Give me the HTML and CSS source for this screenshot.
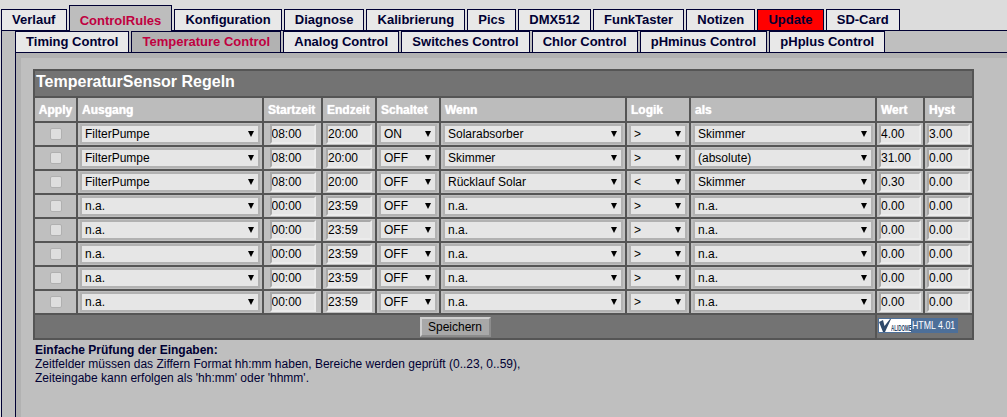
FILE: index.html
```html
<!DOCTYPE html>
<html>
<head>
<meta charset="utf-8"/>
<title>Temperature Control</title>
<link rel="stylesheet" href="styles.css">
</head>
<body>
<div class="tabs">
  <a class="tab">Verlauf</a>
  <a class="tab active">ControlRules</a>
  <a class="tab">Konfiguration</a>
  <a class="tab">Diagnose</a>
  <a class="tab">Kalibrierung</a>
  <a class="tab">Pics</a>
  <a class="tab">DMX512</a>
  <a class="tab">FunkTaster</a>
  <a class="tab">Notizen</a>
  <a class="tab alert">Update</a>
  <a class="tab">SD-Card</a>
</div>
<div class="panel">
  <div class="subtabs">
    <a class="tab sub">Timing Control</a>
    <a class="tab sub active">Temperature Control</a>
    <a class="tab sub">Analog Control</a>
    <a class="tab sub">Switches Control</a>
    <a class="tab sub">Chlor Control</a>
    <a class="tab sub">pHminus Control</a>
    <a class="tab sub">pHplus Control</a>
  </div>
  <div class="subpanel">
    <table class="rules">
      <colgroup>
        <col class="c-apply"><col class="c-sel"><col class="c-start"><col class="c-end"><col class="c-sw"><col class="c-sel"><col class="c-sw"><col class="c-sel"><col class="c-num"><col class="c-last">
      </colgroup>
      <tr><th colspan="10" class="title">TemperaturSensor Regeln</th></tr>
      <tr class="head">
        <th class="center">Apply</th><th>Ausgang</th><th>Startzeit</th><th>Endzeit</th><th>Schaltet</th><th>Wenn</th><th>Logik</th><th>als</th><th>Wert</th><th>Hyst</th>
      </tr>
      <tbody id="rows"></tbody>
      <tr class="foot">
        <td colspan="8" class="center"><button class="save">Speichern</button></td>
        <td colspan="2">
          <span class="badge">
            <span class="badge-left">
              <svg width="12" height="13" viewBox="0 0 12 13"><path d="M0 3 L4 1 L5.5 7 L11 0 L12 0 L6 13 L4 13 Z" fill="#2f4a6b"/></svg><span class="badge-name">ALIDOME</span>
            </span>
            <span class="badge-right"><span class="badge-text">HTML 4.01</span></span>
          </span>
        </td>
      </tr>
    </table>
    <div class="notes">
      <b>Einfache Prüfung der Eingaben:</b><br>
      Zeitfelder müssen das Ziffern Format hh:mm haben, Bereiche werden geprüft (0..23, 0..59),<br>
      Zeiteingabe kann erfolgen als 'hh:mm' oder 'hhmm'.
    </div>
  </div>
</div>
<script>
const data = [
  ['FilterPumpe', '08:00', '20:00', 'ON', 'Solarabsorber', '>', 'Skimmer', '4.00', '3.00'],
  ['FilterPumpe', '08:00', '20:00', 'OFF', 'Skimmer', '>', '(absolute)', '31.00', '0.00'],
  ['FilterPumpe', '08:00', '20:00', 'OFF', 'Rücklauf Solar', '<', 'Skimmer', '0.30', '0.00'],
]
for (let i = 0; i < 5; i++) {
  data.push(['n.a.', '00:00', '23:59', 'OFF', 'n.a.', '>', 'n.a.', '0.00', '0.00'])
}
const sel = function(v) {
  const s = document.createElement('select')
  const o = document.createElement('option')
  o.textContent = v
  s.appendChild(o)
  const w = document.createElement('span')
  w.className = 'sel'
  w.appendChild(s)
  return w
}
const inp = function(v) {
  const i = document.createElement('input')
  i.type = 'text'
  i.value = v
  return i
}
for (const d of data) {
  const tr = document.createElement('tr')
  tr.className = 'row'
  const items = [null, sel(d[0]), inp(d[1]), inp(d[2]), sel(d[3]), sel(d[4]), sel(d[5]), sel(d[6]), inp(d[7]), inp(d[8])]
  for (const it of items) {
    const td = document.createElement('td')
    if (it) {
      td.appendChild(it)
    } else {
      const c = document.createElement('input')
      c.type = 'checkbox'
      td.className = 'center'
      td.appendChild(c)
    }
    tr.appendChild(td)
  }
  rows.appendChild(tr)
}
</script>
</body>
</html>
```

FILE: styles.css
```css
html, body {
  height: 100%;
}
body {
  margin: 0;
  display: flex;
  flex-direction: column;
  background: #dcdcdc;
  font-family: "Liberation Sans", Arial, sans-serif;
  font-size: 12px;
  overflow: hidden;
}
/* tabs */
.tabs {
  display: flex;
  flex: none;
  align-items: flex-end;
  gap: 2px;
  height: 30px;
  padding-left: 1px;
  box-sizing: border-box;
}
.tab {
  box-sizing: border-box;
  height: 21px;
  padding: 0 10.1px;
  line-height: 19px;
  border: 1px solid #000033;
  border-bottom: 0;
  background: #e8e8e8;
  color: #000033;
  font-size: 13px;
  font-weight: bold;
}
.tab.active {
  position: relative;
  height: 26px;
  margin-bottom: -1px;
  line-height: 29px;
  background: #bdbdbd;
  color: #c00040;
}
.tab.alert {
  background: #ff0000;
}
.panel {
  flex: 1;
  display: flex;
  flex-direction: column;
  min-height: 0;
  box-sizing: border-box;
  border-top: 1px solid #000033;
  border-left: 1px solid #000033;
  margin-left: 1px;
  padding-left: 13px;
  background: #bfbfbf;
}
.subtabs {
  display: flex;
  flex: none;
  align-items: flex-end;
  gap: 2px;
  height: 21px;
}
.tab.sub {
  height: 21px;
}
.tab.sub.active {
  height: 21px;
  margin-bottom: 0;
  line-height: 19px;
  background: #b2b2b2;
}
.subpanel {
  flex: 1;
  min-height: 0;
  box-sizing: border-box;
  border-top: 1px solid #000033;
  border-left: 1px solid #000033;
  padding: 16px 0 0 17px;
  background: #bfbfbf;
  box-shadow: inset 5px 5px 0 #b2b2b2;
}
/* rules table */
.rules {
  border-collapse: collapse;
  table-layout: fixed;
  width: 939px;
  border: 2px solid #555;
}
.c-apply { width: 43px; }
.c-sel { width: 186px; }
.c-start { width: 59px; }
.c-end { width: 54px; }
.c-sw { width: 64px; }
.c-num { width: 48px; }
.c-last { width: 49px; }
.rules th, .rules td {
  border: 2px solid #555;
  padding: 0;
}
.rules th {
  height: 23px;
  text-align: left;
  padding-left: 4px;
  color: #fff;
  font-size: 12px;
  background: #bcbcbc;
  text-shadow: 0 0 1px #fff;
}
.rules th.center, .rules td.center {
  text-align: center;
  padding-left: 0;
}
.rules th.title {
  height: 27px;
  box-sizing: border-box;
  background: #737373;
  font-size: 16px;
  padding: 0 0 3px 1px;
  text-shadow: none;
}
.row td {
  height: 22px;
  text-align: left;
  background: #bfbfbf;
}
.foot td {
  height: 23px;
  background: #737373;
}
.sel {
  display: block;
  position: relative;
  margin: 0 2px;
}
.sel select {
  display: block;
  width: 100%;
  height: 20px;
  box-sizing: border-box;
  appearance: none;
  background: #e6e6e6;
  border: 2px solid #b2b2b2;
  border-radius: 0;
  padding: 0 0 0 3px;
  font: 12px "Liberation Sans", Arial, sans-serif;
  color: #000;
}
.sel::after {
  content: "";
  position: absolute;
  right: 6px;
  top: 7px;
  border-left: 3px solid transparent;
  border-right: 3px solid transparent;
  border-top: 6px solid #000;
}
.rules input[type=text] {
  display: block;
  width: calc(100% - 4px);
  height: 20px;
  margin: 0 2px;
  box-sizing: border-box;
  background: #e6e6e6;
  border: 2px solid;
  border-color: #a8a8a8 #ececec #ececec #a8a8a8;
  padding: 0;
  font: 12px "Liberation Sans", Arial, sans-serif;
  color: #000;
}
.row td:nth-child(3) input[type=text],
.row td:nth-child(4) input[type=text] {
  width: 46px;
  margin: 0 auto;
}
.rules input[type=checkbox] {
  appearance: none;
  display: block;
  width: 12px;
  height: 12px;
  margin: 0 auto;
  background: #dedede;
  border: 1px solid #b0b0b0;
  border-radius: 2px;
}
.save {
  height: 20px;
  width: 71px;
  padding: 0;
  background: #a8a8a8;
  border: 2px solid;
  border-color: #cfcfcf #8c8c8c #8c8c8c #cfcfcf;
  font: 12px "Liberation Sans", Arial, sans-serif;
  color: #000;
}
/* validator badge */
.badge {
  display: flex;
  width: 80px;
  height: 15px;
  margin: 0 0 2px 1px;
  box-sizing: border-box;
  border: 1px solid #4d6f99;
  background: #fff;
}
.badge-left {
  display: flex;
  flex: none;
  align-items: flex-end;
  width: 32px;
  color: #2f4a6b;
}
.badge-name {
  display: inline-block;
  width: 20px;
  font-size: 9px;
  font-weight: bold;
  line-height: 8px;
  white-space: nowrap;
  transform: scaleX(.5);
  transform-origin: left;
}
.badge-right {
  flex: 1;
  background: #4d6f99;
  color: #fff;
  line-height: 13px;
  padding-left: 1px;
}
.badge-text {
  display: inline-block;
  width: 44px;
  font-size: 11px;
  white-space: nowrap;
  transform: scaleX(.8);
  transform-origin: left;
}
.notes {
  margin: 3px 0 0 2px;
  color: #000033;
  line-height: 14px;
}
```
